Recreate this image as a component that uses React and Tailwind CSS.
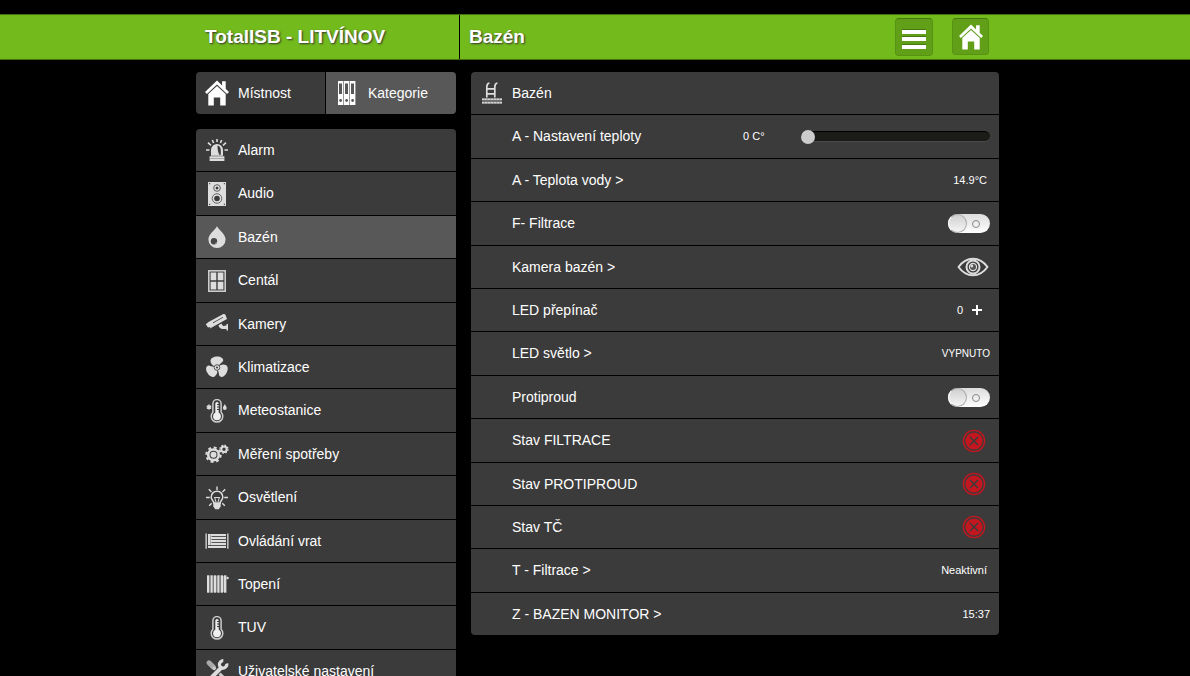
import { useState } from 'react';

const svgProps = {
  viewBox: '0 0 24 24',
  width: 24,
  height: 24,
  fill: 'none',
  className: 'shrink-0',
  'aria-hidden': true
};

const HomeIcon = () => (
  <svg {...svgProps} viewBox="0 0 26 26" width={26} height={26}>
    <path fill="#fff" d="M13 .5 1 12l1.9 2L13 4.600 23.100 14l1.900-2-3.300-3.200V1.200h-3.600v4.200z" />
    <path fill="#fff" d="M13 6 4.300 14V25.500h5.500v-8h6.400v8h5.500V14z" />
  </svg>
);

const BindersIcon = () => (
  <svg {...svgProps} viewBox="0 0 18 24" width={18}>
    {[0, 6, 12].map(x => (
      <g key={x}>
        <rect x={x} y="0" width="5.400" height="24" fill="#fff" />
        <rect x={x + 1} y="2.500" width="3" height="10.500" fill="#585858" />
        <circle cx={x + 2.600} cy="19.500" r="1.400" fill="#585858" />
      </g>
    ))}
  </svg>
);

const AlarmIcon = () => (
  <svg {...svgProps}>
    <path stroke="#ddd" strokeWidth="1.600" d="M12 1v3M7.300 2l1.300 3M16.700 2l-1.300 3M3 4.700l3 2.700M21 4.700l-3 2.700M1 12h3.500M19.500 12H23" />
    <path fill="#ddd" d="M6 17.700V12a6 6 0 0 1 12 0v5.700zM4.600 18.300h14.800V23H4.600z" />
    <path fill="#3b3b3b" d="M12.500 7.500c2 .3 3.300 2 3.300 4.800v4.500h-1.600c-1-2.500-1.800-5.500-1.700-9.300z" />
    <path stroke="#aaa" strokeWidth="1" d="M5 20.500h14" />
  </svg>
);

const AudioIcon = () => (
  <svg {...svgProps}>
    <path fill="#ddd" d="M3 0h18v24H3z" />
    <circle cx="12" cy="6" r="3.300" fill="#eee" stroke="#555" />
    <circle cx="12" cy="6" r="1.500" fill="#3b3b3b" />
    <circle cx="12" cy="16.500" r="4.800" fill="#ddd" stroke="#666" />
    <circle cx="12" cy="16.500" r="2.800" fill="#3b3b3b" />
    <path fill="#555" d="M4 1h1.200v1.200H4zM18.800 1H20v1.200h-1.200zM4 21.800h1.200V23H4zM18.800 21.800H20V23h-1.200z" />
  </svg>
);

const DropIcon = () => (
  <svg {...svgProps}>
    <path fill="#ddd" d="M12 1.200c2 3.600 8.600 8.200 8.600 13.200a8.600 8.600 0 0 1-17.200 0C3.400 9.400 10 4.800 12 1.200z" />
    <circle cx="9" cy="16.300" r="3.200" fill="#484848" />
    <path stroke="#aaa" d="M7 19.300a3 3 0 0 0 4.500-2" />
  </svg>
);

const WindowIcon = () => (
  <svg {...svgProps}>
    <rect x="3.800" y="1.800" width="16.400" height="20.400" stroke="#ccc" strokeWidth="1.600" />
    <path fill="#ddd" d="M5.600 3.600h5.700v7.600H5.600zM12.700 3.600h5.700v7.600h-5.700zM5.600 12.800h5.700v7.600H5.600zM12.700 12.800h5.700v7.600h-5.700z" />
  </svg>
);

const CameraIcon = () => (
  <svg {...svgProps}>
    <path fill="#ddd" d="M3.500 10 17.500 2.400c1.500-.8 2.500-.6 3 .6l1.500 4L8.500 14.500 5 16.500l.3-1.500L3 15.500.800 12.300z" />
    <path stroke="#555" strokeWidth="1" d="m8 10.800 10-5.500" />
    <path fill="#ddd" d="m13.500 13.300 3-1.700 1.500 2.400 3.500-.5V12H23v6.500h-1.500V17H17c-1.500 0-3.500-2.200-3.500-3.700z" />
  </svg>
);

const FanIcon = () => (
  <svg {...svgProps}>
    {[0, 120, 240].map(a => (
      <path
        key={a}
        fill="#ddd"
        transform={`rotate(${a} 12 12.5)`}
        d="M10.500 11.500C7.500 11 5.500 8.500 5.500 6c0-3 3.200-4.500 6.800-4.500 3.500 0 6.200 1.700 5.900 4-.4 2.200-3.200 2.200-4.700 6z"
      />
    ))}
    <circle cx="12" cy="12.500" r="2.800" fill="#ddd" stroke="#555" />
    <circle cx="12" cy="12.500" r="1" fill="#3b3b3b" />
  </svg>
);

const ThermometerIcon = ({ weather }) => (
  <svg {...svgProps}>
    <path stroke="#ccc" strokeWidth="1.500" d="M7.900 13.200V4.700a4.100 4.100 0 0 1 8.200 0v8.500a5.800 5.800 0 1 1-8.200 0z" />
    <circle cx="12" cy="17.300" r="3.900" fill="#eee" />
    <path stroke="#eee" strokeWidth="3.400" strokeLinecap="round" d="M12 4.700V16" />
    <path stroke="#3b3b3b" strokeWidth="1" d="M12 5.500h2M12 8h2M12 10.500h2" />
    {weather && (
      <>
        <path stroke="#ddd" strokeWidth="1.500" d="M4 5.500v5M1.800 6.800l4.400 2.500M1.800 9.300l4.400-2.500" />
        <path fill="#ddd" d="M19.800 5c.5 1.500 1.900 2.500 1.900 4a1.900 1.900 0 0 1-3.800 0c0-1.500 1.400-2.500 1.900-4z" />
      </>
    )}
  </svg>
);

const GearsIcon = () => (
  <svg {...svgProps}>
    <circle cx="8.500" cy="12.800" r="7.200" stroke="#ddd" strokeWidth="2" strokeDasharray="2.900 2.755" />
    <circle cx="8.500" cy="12.800" r="5.300" stroke="#ddd" strokeWidth="2.600" />
    <circle cx="8.500" cy="12.800" r="3" fill="#ddd" />
    <circle cx="19" cy="7.200" r="4" stroke="#ddd" strokeWidth="1.300" strokeDasharray="1.600 1.542" />
    <circle cx="19" cy="7.200" r="2.700" stroke="#ddd" strokeWidth="2" />
  </svg>
);

const BulbIcon = () => (
  <svg {...svgProps}>
    <path stroke="#ddd" strokeWidth="1.400" d="M12 .5v3.500M3.800 3.300 6.500 6M20.200 3.300 17.500 6M1 11.500h3.800M19.200 11.500H23M4.200 19.700l2.500-2.500M19.800 19.700l-2.500-2.500" />
    <path stroke="#ddd" strokeWidth="1.500" d="M9 17.200c0-2.200-2.800-3-2.800-6.200a5.800 5.800 0 0 1 11.600 0c0 3.200-2.800 4-2.800 6.200z" />
    <path stroke="#ddd" d="m9.500 11 1.500 5M14.500 11 13 16M9.500 11.500h5" />
    <path fill="#ddd" d="M8.300 16.500h7.400v4l-2 2.700h-3.400l-2-2.700z" />
  </svg>
);

const GateIcon = () => (
  <svg {...svgProps}>
    <path fill="#ddd" d="M.5 4.500h1.300v15.200H.5zM22.200 4.500h1.300v15.200h-1.300zM3 5h18v14H3z" />
    <path stroke="#555" strokeWidth="1" d="M6.500 7.500H21M6.500 10.500H21M6.500 13.500H21M3 16.500h18" />
    <path stroke="#999" strokeWidth=".8" d="M5.500 6v10" />
  </svg>
);

const RadiatorIcon = () => (
  <svg {...svgProps}>
    {[2, 5.400, 8.800, 12.200, 15.600, 19].map(x => (
      <rect key={x} x={x} y="3.300" width="2.400" height="17.400" fill="#ddd" />
    ))}
    <path stroke="#888" strokeWidth="1" d="M4.900 4v16M8.300 4v16M11.700 4v16M15.100 4v16M18.500 4v16" />
    <circle cx="22.600" cy="6" r="1.200" fill="#ddd" />
  </svg>
);

const ToolsIcon = () => (
  <svg {...svgProps}>
    <path stroke="#aaa" strokeWidth="5" strokeLinecap="round" d="m4 3.800 4.500 4.500" />
    <path stroke="#ccc" strokeWidth="3" strokeLinecap="round" d="m9 9 12 12" />
    <path stroke="#3b3b3b" strokeWidth="6" d="M8 17 16 9" />
    <path stroke="#ddd" strokeWidth="4" d="M2.500 22.500 16.500 8.500" />
    <path stroke="#ddd" strokeWidth="3.200" d="M21.700 4.500a3.700 3.700 0 1 1-3.400-2.800" />
  </svg>
);

const PoolIcon = () => (
  <svg {...svgProps}>
    <path stroke="#ddd" strokeWidth="1.700" d="M6.800 16.500V6c0-2.500.6-3.600 2.600-4M14.800 16.500V6c0-2.500.6-3.600 2.600-4M6.800 7.800h8M6.800 12.800h8" />
    <path stroke="#aaa" strokeWidth="2.200" d="M2 18.300h20M2 21.700h20" />
    <path stroke="#ddd" strokeWidth="1" strokeDasharray="2 1" d="M2 18.300h20M2 21.700h20" />
  </svg>
);

const EyeIcon = () => (
  <svg viewBox="0 0 32 20" width="32" height="20" fill="none" aria-hidden="true">
    <path stroke="#ddd" strokeWidth="2" strokeLinejoin="round" d="M1.500 10C5.500 4.500 10 1.700 16 1.700S26.500 4.500 30.500 10C26.500 15.500 22 18.300 16 18.300S5.500 15.500 1.500 10z" />
    <circle cx="16" cy="10" r="6.500" stroke="#ddd" strokeWidth="2" />
    <circle cx="16" cy="10" r="4.200" fill="#ddd" />
    <circle cx="16" cy="10" r="3" fill="#555" />
    <circle cx="14.800" cy="9" r="1.400" fill="#ddd" />
  </svg>
);

const OffIcon = () => (
  <svg viewBox="0 0 24 24" width="24" height="24" fill="none" role="img" aria-label="Vypnuto">
    <circle cx="12" cy="12" r="10.600" stroke="#c4161f" strokeWidth="1.400" />
    <circle cx="12" cy="12" r="8.600" fill="#c4161f" />
    <path stroke="#3b3b3b" strokeWidth="1.500" d="m8 8 8 8M16 8l-8 8" />
  </svg>
);

const categories = [
  { name: 'Alarm', icon: <AlarmIcon /> },
  { name: 'Audio', icon: <AudioIcon /> },
  { name: 'Bazén', icon: <DropIcon /> },
  { name: 'Centál', icon: <WindowIcon /> },
  { name: 'Kamery', icon: <CameraIcon /> },
  { name: 'Klimatizace', icon: <FanIcon /> },
  { name: 'Meteostanice', icon: <ThermometerIcon weather /> },
  { name: 'Měření spotřeby', icon: <GearsIcon /> },
  { name: 'Osvětlení', icon: <BulbIcon /> },
  { name: 'Ovládání vrat', icon: <GateIcon /> },
  { name: 'Topení', icon: <RadiatorIcon /> },
  { name: 'TUV', icon: <ThermometerIcon /> },
  { name: 'Uživatelské nastavení', icon: <ToolsIcon /> }
];

const rowClass =
  'h-[43px] nth-[5n+2]:h-[44px] nth-[5n+4]:h-[44px] border-b border-black last:h-[42px] last:border-b-0';

const Toggle = ({ id }) => {
  const [on, setOn] = useState(false);

  return (
    <span className="relative block h-[19px] w-[42px]">
      <input
        id={id}
        type="checkbox"
        checked={on}
        onChange={e => setOn(e.target.checked)}
        className="peer block h-full w-full cursor-pointer appearance-none rounded-full bg-linear-to-b from-[#dcdcdc] to-white checked:from-[#73ba1c] checked:to-[#8fd435]"
      />
      <span className="pointer-events-none absolute top-0 left-0 size-[19px] rounded-full border border-[#aaa] border-l-white bg-linear-to-b from-[#d0d0d0] to-[#f5f5f5] peer-checked:left-[23px]" />
      <span className="pointer-events-none absolute top-[6px] left-[24px] size-2 rounded-full border border-[#888] peer-checked:hidden" />
    </span>
  );
};

const TemperatureSlider = ({ id }) => {
  const [value, setValue] = useState(0);

  return (
    <span className="flex items-center">
      <output htmlFor={id} className="w-[58px] text-[11px]">{value} C°</output>
      <input
        id={id}
        type="range"
        min="0"
        max="40"
        value={value}
        onChange={e => setValue(Number(e.target.value))}
        className="h-[11px] w-[189px] cursor-pointer appearance-none rounded-full border-t border-b border-t-black border-b-[#4a4a4a] bg-[#1b1b18] [&::-webkit-slider-thumb]:size-[14px] [&::-webkit-slider-thumb]:appearance-none [&::-webkit-slider-thumb]:rounded-full [&::-webkit-slider-thumb]:bg-[#ccc]"
      />
    </span>
  );
};

const Stepper = () => {
  const [value, setValue] = useState(0);

  return (
    <span className="mr-2 flex items-center gap-[9px]">
      <span className="text-[11px]">{value}</span>
      <button type="button" aria-label="Přidat" onClick={() => setValue(value + 1)}>
        <svg viewBox="0 0 10 10" width="10" height="10" aria-hidden="true">
          <path stroke="#fff" strokeWidth="2" d="M5 0v10M0 5h10" />
        </svg>
      </button>
    </span>
  );
};

const Row = ({ label, htmlFor, link, children }) => (
  <li className={`flex items-center justify-between pr-[9px] pl-[41px] ${rowClass}`}>
    {htmlFor && <label htmlFor={htmlFor}>{label}</label>}
    {link && <a href="#">{label} &gt;</a>}
    {!htmlFor && !link && <span>{label}</span>}
    {children}
  </li>
);

const Header = () => (
  <header className="border-t border-b border-t-[#45700f] border-b-[#45700f] bg-[#73ba1c] pl-[5px]">
    <div className="mx-auto grid h-[44px] max-w-[803px] grid-cols-[263px_1fr] text-[19px] font-bold [text-shadow:1px_1px_2px_#333]">
      <h1 className="pl-[9px] leading-[43px]">TotalISB - LITVÍNOV</h1>
      <div className="flex items-start justify-between border-l border-black pl-[9px]">
        <h2 className="leading-[43px]">Bazén</h2>
        <div className="flex gap-[19px] pt-[3px] pr-[10px]">
          <button
            type="button"
            aria-label="Menu"
            className="flex size-[38px] items-center justify-center rounded border border-[#579312] border-t-[#47780d] bg-[#629f18]"
          >
            <svg viewBox="0 0 24 20" width="24" height="20" aria-hidden="true" className="mt-1">
              <path stroke="#47780d" strokeWidth="1" d="M0 .5h24M0 7.500h24M0 15.500h24" />
              <path fill="#fff" d="M0 1h24v4H0zM0 8h24v4H0zM0 16h24v4H0z" />
            </svg>
          </button>
          <a
            href="#"
            aria-label="Domů"
            className="flex size-[37px] items-center justify-center rounded border border-[#579312] border-t-[#47780d] bg-[#629f18]"
          >
            <HomeIcon />
          </a>
        </div>
      </div>
    </div>
  </header>
);

export default function App() {
  const [selected, setSelected] = useState('Bazén');

  return (
    <div className="h-screen overflow-hidden bg-black pt-[14px] font-['Liberation_Sans',Arial,sans-serif] text-[14px] text-white">
      <Header />
      <div className="pl-[5px]">
        <main className="mx-auto grid max-w-[803px] grid-cols-[260px_1fr] items-start gap-[15px] pt-3">
          <div className="flex flex-col gap-[15px]">
            {/* Room / category switch */}
            <div className="grid h-[42px] grid-cols-2 overflow-hidden rounded">
              <button type="button" className="flex items-center gap-2 border-r border-black bg-[#3b3b3b] pl-2">
                <HomeIcon />
                Místnost
              </button>
              <button type="button" className="flex items-center gap-3 bg-[#585858] pl-3">
                <BindersIcon />
                Kategorie
              </button>
            </div>

            {/* Categories */}
            <nav>
              <ul className="overflow-hidden rounded bg-[#3b3b3b]">
                {categories.map(({ name, icon }) => (
                  <li key={name} className={rowClass}>
                    <button
                      type="button"
                      onClick={() => setSelected(name)}
                      className={`flex h-full w-full items-center gap-[9px] pl-[9px] text-left ${
                        name === selected ? 'bg-[#585858]' : ''
                      }`}
                    >
                      {icon}
                      {name}
                    </button>
                  </li>
                ))}
              </ul>
            </nav>
          </div>

          {/* Controls of the selected category */}
          <ul className="overflow-hidden rounded bg-[#3b3b3b]">
            <li className={`flex items-center gap-2 pl-[9px] ${rowClass}`}>
              <PoolIcon />
              <h3>Bazén</h3>
            </li>
            <Row label="A - Nastavení teploty" htmlFor="temperature">
              <TemperatureSlider id="temperature" />
            </Row>
            <Row label="A - Teplota vody" link>
              <span className="mr-[3px] text-[11px]">14.9°C</span>
            </Row>
            <Row label="F- Filtrace" htmlFor="filter">
              <Toggle id="filter" />
            </Row>
            <Row label="Kamera bazén" link>
              <span className="mr-px">
                <EyeIcon />
              </span>
            </Row>
            <Row label="LED přepínač">
              <Stepper />
            </Row>
            <Row label="LED světlo" link>
              <span className="text-[10px]">VYPNUTO</span>
            </Row>
            <Row label="Protiproud" htmlFor="counterflow">
              <Toggle id="counterflow" />
            </Row>
            {['FILTRACE', 'PROTIPROUD', 'TČ'].map(name => (
              <Row key={name} label={`Stav ${name}`}>
                <span className="mr-1">
                  <OffIcon />
                </span>
              </Row>
            ))}
            <Row label="T - Filtrace" link>
              <span className="mr-[3px] text-[11px]">Neaktivní</span>
            </Row>
            <Row label="Z - BAZEN MONITOR" link>
              <span className="text-[11px]">15:37</span>
            </Row>
          </ul>
        </main>
      </div>
    </div>
  );
}
